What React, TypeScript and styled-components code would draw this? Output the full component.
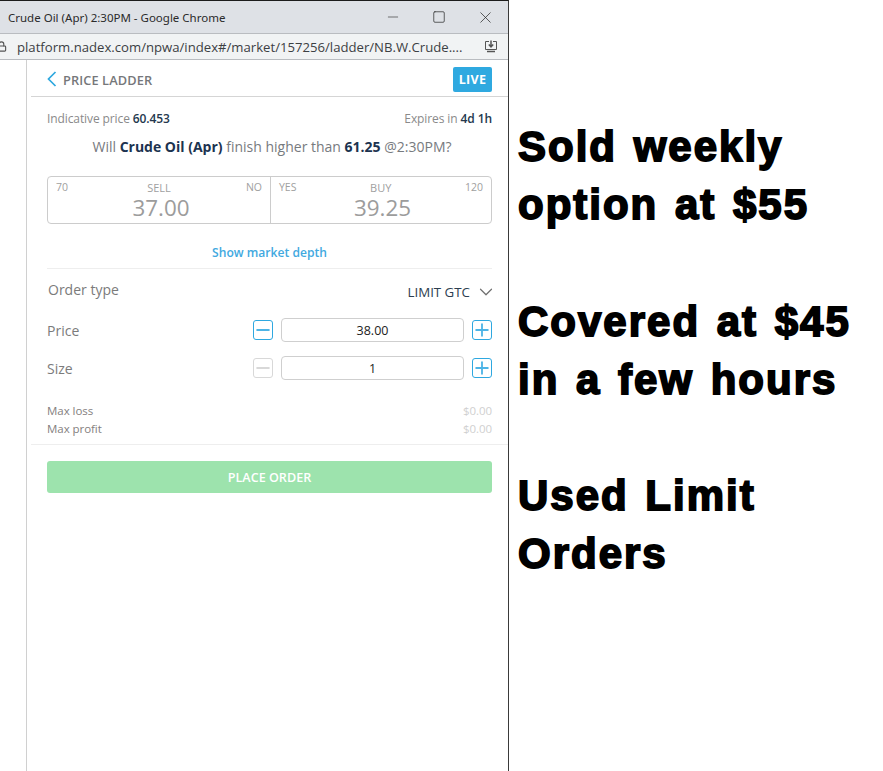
import styled, { createGlobalStyle } from 'styled-components';
import { ChevronDown, Lock, Minus, Plus, Square, X } from 'lucide-react';

const GlobalStyle = createGlobalStyle`
  html, body {
    margin: 0;
    padding: 0;
    background: #ffffff;
    font-family: 'Open Sans', 'Noto Sans', sans-serif;
  }
  * {
    box-sizing: border-box;
  }
`;

const Page = styled.div`
  display: flex;
  width: 883px;
  height: 771px;
  overflow: hidden;
  background: #ffffff;
`;
const ChromeWindow = styled.div`
  display: flex;
  flex-direction: column;
  width: 509px;
  height: 771px;
  border-top: 1px solid #1c1c1c;
  border-right: 1px solid #3a3a3a;
`;
const TitleBar = styled.div`
  display: flex;
  align-items: center;
  height: 32px;
  padding-left: 8px;
  background: #dee1e6;
  font-family: 'Noto Sans', 'Open Sans', sans-serif;
  font-size: 11.5px;
  color: #2a2a2a;
`;
const TitleText = styled.div`
  flex: 1;
`;
const WindowButton = styled.div`
  display: flex;
  justify-content: center;
  align-items: center;
  width: 46px;
  height: 32px;
  color: #222222;
`;
const AddressBar = styled.div`
  display: flex;
  align-items: center;
  height: 27px;
  border-top: 1px solid #b9bcc0;
  border-bottom: 1px solid #b9bcc0;
  background: #f1f3f4;
  font-size: 13.15px;
  color: #3c4043;
`;
const LockSlot = styled.div`
  display: flex;
  width: 21px;
  margin-left: -4px;
  color: #555555;
`;
const Url = styled.div`
  flex: 1;
  white-space: nowrap;
`;
const SaveSlot = styled.div`
  display: flex;
  margin-right: 10px;
  color: #555555;
`;
const Viewport = styled.div`
  display: flex;
  flex: 1;
`;
const SideRail = styled.div`
  width: 27px;
  border-right: 1px solid #d0d0d0;
`;
const Panel = styled.div`
  flex: 1;
  padding-left: 4px;
`;
const LadderHeader = styled.div`
  display: flex;
  align-items: center;
  justify-content: space-between;
  height: 37px;
  padding: 2px 16px 0 16px;
  border-bottom: 1px solid #d5d5d5;
`;
const BackTitle = styled.div`
  display: flex;
  align-items: center;
  gap: 6px;
  padding-top: 1px;
  font-size: 12.8px;
  font-weight: 600;
  letter-spacing: 0.1px;
  color: #76777a;
`;
const BackIcon = styled.svg`
  width: 10px;
  height: 16px;
  margin-top: -2px;
  fill: none;
  stroke: #2ea8df;
  stroke-width: 1.7;
`;
const LiveBadge = styled.div`
  display: flex;
  align-items: center;
  justify-content: center;
  width: 39px;
  height: 25px;
  border-radius: 2px;
  background: #2fa9e0;
  color: #ffffff;
  font-size: 12.5px;
  font-weight: 700;
  letter-spacing: 0.3px;
`;
const Body = styled.div`
  padding: 0 16px;
`;
const InfoRow = styled.div`
  display: flex;
  justify-content: space-between;
  align-items: center;
  height: 20px;
  margin-top: 11px;
  font-size: 12px;
  letter-spacing: -0.1px;
  color: #8a8a8a;
`;
const Strong = styled.b`
  font-weight: 600;
  color: #24384e;
`;
const Question = styled.div`
  height: 24px;
  margin-top: 7px;
  padding-left: 5px;
  text-align: center;
  font-size: 14px;
  line-height: 24px;
  color: #777a7e;
  b {
    font-weight: 700;
    color: #1c3350;
  }
`;
const Quotes = styled.div`
  display: grid;
  grid-template-columns: 222px 1fr;
  height: 48px;
  margin-top: 17px;
  border: 1px solid #cccccc;
  border-radius: 4px;
`;
const Quote = styled.div<{ $divided?: boolean }>`
  padding: 4px 8px 0;
  border-left: ${(p) => (p.$divided ? '1px solid #cccccc' : 'none')};
  color: #a0a0a0;
`;
const QuoteLabels = styled.div<{ $nudge?: number }>`
  display: flex;
  justify-content: space-between;
  font-size: 10.5px;
  line-height: 13px;
`;
const QuoteSide = styled.span<{ $shift?: boolean }>`
  font-size: 11px;
  transform: ${(p) => (p.$shift ? 'translateX(2px)' : 'none')};
`;
const QuotePrice = styled.div<{ $shift?: number }>`
  padding-top: 1px;
  padding-left: ${(p) => p.$shift ?? 0}px;
  text-align: center;
  font-size: 22.4px;
  line-height: 26px;
  color: #9c9c9c;
`;
const DepthLink = styled.div`
  height: 45px;
  padding-top: 20px;
  border-bottom: 1px solid #eeeeee;
  text-align: center;
  font-size: 12.1px;
  font-weight: 600;
  line-height: 18px;
  color: #42a9df;
`;
const OrderType = styled.div`
  display: flex;
  justify-content: space-between;
  align-items: center;
  height: 40px;
  margin-bottom: 2px;
  padding-left: 1px;
  font-size: 14px;
  color: #7b7b7b;
`;
const OrderValue = styled.div`
  display: flex;
  align-items: center;
  gap: 5px;
  padding-top: 6px;
  font-size: 13.3px;
  color: #2c3e50;
`;
const ChevronSlot = styled.span`
  display: flex;
  margin-right: -5px;
  color: #6f6f6f;
`;
const FieldRow = styled.div`
  display: flex;
  align-items: center;
  height: 38px;
  font-size: 14px;
  color: #7b7b7b;
`;
const FieldLabel = styled.div`
  flex: 1;
`;
const Stepper = styled.div<{ $off?: boolean }>`
  display: flex;
  align-items: center;
  justify-content: center;
  width: 20px;
  height: 20px;
  border: 1px solid ${(p) => (p.$off ? '#d8d8d8' : '#2ea8e0')};
  border-radius: 3px;
  color: ${(p) => (p.$off ? '#d8d8d8' : '#4db4e6')};
  svg {
    flex-shrink: 0;
  }
`;
const NumberBox = styled.div`
  display: flex;
  align-items: center;
  justify-content: center;
  width: 183px;
  height: 24px;
  margin: 0 8px;
  border: 1px solid #cfcfcf;
  border-radius: 4px;
  font-size: 12.5px;
  color: #222222;
`;
const Summary = styled.div`
  margin-top: 15px;
`;
const SummaryRow = styled.div`
  display: flex;
  justify-content: space-between;
  height: 18px;
  font-size: 11.5px;
  line-height: 18px;
  letter-spacing: -0.05px;
  color: #84807e;
`;
const SummaryValue = styled.span`
  color: #d0d0d0;
`;
const FooterRule = styled.div`
  margin-top: 6px;
  border-top: 1px solid #eeeeee;
`;
const PlaceOrder = styled.div`
  display: flex;
  align-items: center;
  justify-content: center;
  height: 32px;
  margin: 16px 16px 0;
  border-radius: 3px;
  background: #9de3ad;
  color: #ffffff;
  font-size: 12.6px;
  font-weight: 600;
`;
const Notes = styled.div`
  padding: 118px 0 0 9px;
  font-family: 'Liberation Sans', Arial, sans-serif;
  font-size: 42px;
  font-weight: 700;
  line-height: 58.2px;
  letter-spacing: 2px;
  word-spacing: 3px;
  color: #000000;
  -webkit-text-stroke: 1.8px #000000;
  white-space: pre;
`;

export default function App() {
  return (
    <Page>
      <GlobalStyle />
      <ChromeWindow>
        <TitleBar>
          <TitleText>Crude Oil (Apr) 2:30PM - Google Chrome</TitleText>
          <WindowButton>
            <Minus size={16} strokeWidth={0.9} />
          </WindowButton>
          <WindowButton>
            <Square size={14} strokeWidth={1.2} />
          </WindowButton>
          <WindowButton>
            <X size={19} strokeWidth={0.9} />
          </WindowButton>
        </TitleBar>
        <AddressBar>
          <LockSlot>
            <Lock size={11} strokeWidth={2.5} />
          </LockSlot>
          <Url>platform.nadex.com/npwa/index#/market/157256/ladder/NB.W.Crude....</Url>
          <SaveSlot>
            <svg width="14" height="13" viewBox="0 0 14 13" fill="none" stroke="currentColor">
              <path d="M5 1.5H1.5v8h11v-8H9" />
              <path d="M7 0.5v6M4.8 4.5 7 6.8l2.2-2.3" strokeWidth="1.5" />
              <path d="M3 11.5h8" strokeWidth="1.5" />
            </svg>
          </SaveSlot>
        </AddressBar>
        <Viewport>
          <SideRail />
          <Panel>
            <LadderHeader>
              <BackTitle>
                <BackIcon viewBox="0 0 10 16">
                  <path d="M8.5 1 1.5 8l7 7" />
                </BackIcon>
                PRICE LADDER
              </BackTitle>
              <LiveBadge>LIVE</LiveBadge>
            </LadderHeader>
            <Body>
              <InfoRow>
                <span>
                  Indicative price <Strong>60.453</Strong>
                </span>
                <span>
                  Expires in <Strong>4d 1h</Strong>
                </span>
              </InfoRow>
              <Question>
                Will <b>Crude Oil (Apr)</b> finish higher than <b>61.25</b> @2:30PM?
              </Question>
              <Quotes>
                <Quote>
                  <QuoteLabels>
                    <span>70</span>
                    <QuoteSide $shift>SELL</QuoteSide>
                    <span>NO</span>
                  </QuoteLabels>
                  <QuotePrice $shift={4}>37.00</QuotePrice>
                </Quote>
                <Quote $divided>
                  <QuoteLabels>
                    <span>YES</span>
                    <QuoteSide>BUY</QuoteSide>
                    <span>120</span>
                  </QuoteLabels>
                  <QuotePrice $shift={3}>39.25</QuotePrice>
                </Quote>
              </Quotes>
              <DepthLink>Show market depth</DepthLink>
              <OrderType>
                <span>Order type</span>
                <OrderValue>
                  LIMIT GTC
                  <ChevronSlot>
                    <ChevronDown size={22} strokeWidth={1.3} />
                  </ChevronSlot>
                </OrderValue>
              </OrderType>
              <FieldRow>
                <FieldLabel>Price</FieldLabel>
                <Stepper>
                  <Minus size={20} strokeWidth={2.4} />
                </Stepper>
                <NumberBox>38.00</NumberBox>
                <Stepper>
                  <Plus size={20} strokeWidth={2.2} />
                </Stepper>
              </FieldRow>
              <FieldRow>
                <FieldLabel>Size</FieldLabel>
                <Stepper $off>
                  <Minus size={20} strokeWidth={2.4} />
                </Stepper>
                <NumberBox>1</NumberBox>
                <Stepper>
                  <Plus size={20} strokeWidth={2.2} />
                </Stepper>
              </FieldRow>
              <Summary>
                <SummaryRow>
                  <span>Max loss</span>
                  <SummaryValue>$0.00</SummaryValue>
                </SummaryRow>
                <SummaryRow>
                  <span>Max profit</span>
                  <SummaryValue>$0.00</SummaryValue>
                </SummaryRow>
              </Summary>
            </Body>
            <FooterRule />
            <PlaceOrder>PLACE ORDER</PlaceOrder>
          </Panel>
        </Viewport>
      </ChromeWindow>
      <Notes>
        {'Sold weekly\noption at $55\n\nCovered at $45\nin a few hours\n\nUsed Limit\nOrders'}
      </Notes>
    </Page>
  );
}
